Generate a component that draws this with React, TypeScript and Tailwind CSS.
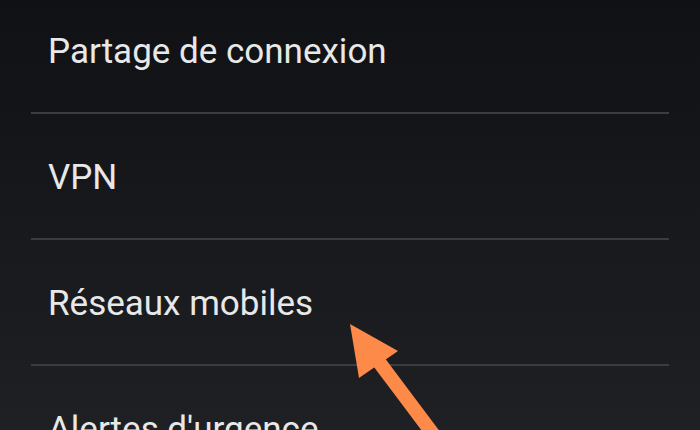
const items = ["Partage de connexion", "VPN", "Réseaux mobiles", "Alertes d'urgence"];

export default function App() {
  return (
    <div className="relative w-[700px] h-[430px] overflow-hidden bg-gradient-to-b from-[#0f1114] to-[#1e2024] font-['Roboto',sans-serif]">
      <div className="flex flex-col mt-[-12px]">
        {items.map((label, i) => (
          <div key={label}>
            {i > 0 && <div className="ml-[31px] mr-[31px] h-[2px] bg-[#3a3d40]" />}
            <div className="h-[124px] flex items-center pl-[48px] pt-[2px] text-[35px] text-[#e8e8e8] leading-none">
              {label}
            </div>
          </div>
        ))}
      </div>

      {/* annotation arrow */}
      <svg className="absolute left-0 top-0" width="700" height="430" viewBox="0 0 700 430">
        <polygon points="350,324 398,351 359,378" fill="#fd8a48" />
        <line x1="379" y1="362" x2="445" y2="450" stroke="#fd8a48" strokeWidth="14" />
      </svg>
    </div>
  );
}
